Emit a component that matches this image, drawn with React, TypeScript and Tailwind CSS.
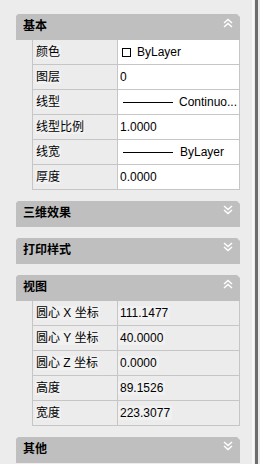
import React from "react";

function Chevrons({ up }: { up: boolean }) {
  return (
    <svg width="10" height="10" viewBox="0 0 10 10" className="mt-[4px]">
      {up ? (
        <>
          <polyline points="1,5 5,1.5 9,5" fill="none" stroke="#ffffff" strokeWidth="1.5" />
          <polyline points="1,9 5,5.5 9,9" fill="none" stroke="#ffffff" strokeWidth="1.5" />
        </>
      ) : (
        <>
          <polyline points="1,1 5,4.5 9,1" fill="none" stroke="#ffffff" strokeWidth="1.5" />
          <polyline points="1,5 5,8.5 9,5" fill="none" stroke="#ffffff" strokeWidth="1.5" />
        </>
      )}
    </svg>
  );
}

function Header({ title, open }: { title: string; open: boolean }) {
  return (
    <div className="h-[26px] bg-[#bfbfbf] flex items-start justify-between pl-[7px] pr-[7px] [clip-path:polygon(2px_0,calc(100%-3px)_0,100%_3px,100%_100%,0_100%,0_2px)]">
      <span className="font-bold text-[12px] leading-[25px] text-black">{title}</span>
      <Chevrons up={open} />
    </div>
  );
}

type Row = { label: string; value: React.ReactNode };

function Table({ rows, readOnly }: { rows: Row[]; readOnly?: boolean }) {
  return (
    <div className="ml-[16px] border-l border-r border-[#c6c6c6]">
      {rows.map((r, i) => (
        <div key={i} className="flex h-[25px] border-b border-[#c6c6c6]">
          <div className="w-[85px] shrink-0 border-r border-[#c6c6c6] flex items-center pl-[2px]">
            <span className="px-[1px] leading-[14px] text-[12px] bg-[#f1f1f1] text-black whitespace-nowrap">
              {r.label}
            </span>
          </div>
          <div
            className={
              "flex-1 min-w-0 flex items-center overflow-hidden text-[12px] text-black " +
              (readOnly ? "bg-transparent" : "bg-white")
            }
          >
            {readOnly ? (
              <span className="px-[2px] leading-[14px] bg-[#f1f1f1] whitespace-nowrap">{r.value}</span>
            ) : (
              <div className="pl-[2px] flex items-center whitespace-nowrap">{r.value}</div>
            )}
          </div>
        </div>
      ))}
    </div>
  );
}

function Section({
  title,
  open,
  rows,
  readOnly,
}: {
  title: string;
  open: boolean;
  rows?: Row[];
  readOnly?: boolean;
}) {
  return (
    <div className="mb-[11px]">
      <Header title={title} open={open} />
      {open && rows ? <Table rows={rows} readOnly={readOnly} /> : null}
    </div>
  );
}

export default function App() {
  const basic: Row[] = [
    {
      label: "颜色",
      value: (
        <>
          <span className="ml-[2px] w-[9px] h-[9px] border border-black bg-white inline-block" />
          <span className="ml-[6px]">ByLayer</span>
        </>
      ),
    },
    { label: "图层", value: <span>0</span> },
    {
      label: "线型",
      value: (
        <>
          <span className="ml-[3px] w-[50px] h-[1px] bg-black inline-block" />
          <span className="ml-[6px]">Continuo...</span>
        </>
      ),
    },
    { label: "线型比例", value: <span>1.0000</span> },
    {
      label: "线宽",
      value: (
        <>
          <span className="ml-[3px] w-[50px] h-[1px] bg-black inline-block" />
          <span className="ml-[7px]">ByLayer</span>
        </>
      ),
    },
    { label: "厚度", value: <span>0.0000</span> },
  ];
  const view: Row[] = [
    { label: "圆心 X 坐标", value: "111.1477" },
    { label: "圆心 Y 坐标", value: "40.0000" },
    { label: "圆心 Z 坐标", value: "0.0000" },
    { label: "高度", value: "89.1526" },
    { label: "宽度", value: "223.3077" },
  ];
  return (
    <div
      className="w-[260px] h-[464px] bg-[#ececec] flex overflow-hidden"
      style={{ fontFamily: '"Liberation Sans", "Noto Sans CJK SC", sans-serif' }}
    >
      <div className="w-[252px] shrink-0 pt-[14px] pl-[16px] pr-[12px]">
        <Section title="基本" open rows={basic} />
        <Section title="三维效果" open={false} />
        <Section title="打印样式" open={false} />
        <Section title="视图" open rows={view} readOnly />
        <Section title="其他" open={false} />
      </div>
      <div className="w-[2px] shrink-0 bg-[#f8f8f8]" />
      <div className="w-[1px] shrink-0" />
      <div className="w-[3px] shrink-0 bg-[#6e6e6e]" />
      <div className="flex-1" />
    </div>
  );
}
